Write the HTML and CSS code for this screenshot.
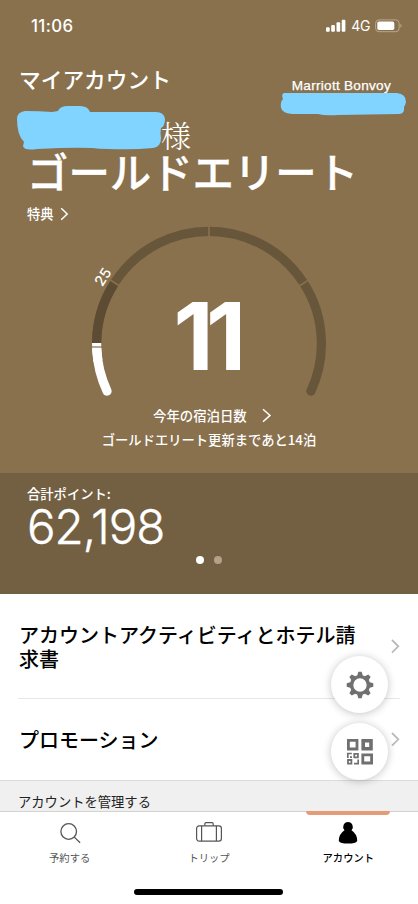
FILE: index.html
```html
<!DOCTYPE html>
<html lang="ja">
<head>
<meta charset="utf-8">
<meta name="viewport" content="width=device-width">
<title>マイアカウント</title>
<link rel="stylesheet" href="styles.css">
</head>
<body>
<div class="app">
  <header class="hero">
    <div class="status">
      <span class="time">11:06</span>
      <div class="signals">
        <svg width="20" height="14" viewBox="0 0 20 14" fill="#fff"><rect x="0" y="8.3" width="3.7" height="4.5" rx="1"/><rect x="5.2" y="6" width="3.7" height="6.8" rx="1"/><rect x="10.5" y="3.3" width="3.7" height="9.5" rx="1"/><rect x="15.7" y=".7" width="3.7" height="12.1" rx="1"/></svg>
        <span class="network">4G</span>
        <svg width="28" height="14" viewBox="0 0 28 14"><rect x=".6" y=".9" width="23.6" height="11.8" rx="3.4" fill="none" stroke="#b7a78e"/><rect x="2.3" y="2.6" width="17" height="8.4" rx="1.8" fill="#fff"/><path d="M25.4 4.8q2.6 2 0 4z" fill="#b7a78e"/></svg>
      </div>
    </div>
    <div class="titlebar">
      <h1>マイアカウント</h1>
      <span class="program">Marriott Bonvoy</span>
    </div>
    <div class="name"><span>様</span></div>
    <div class="tier">ゴールドエリート</div>
    <div class="benefits">特典<svg width="9" height="14" viewBox="0 0 9 14"><path d="M1.2 1.2 7.2 7l-6 5.8"/></svg></div>
    <div class="gauge">
      <svg class="arc" width="260" height="180" viewBox="79 222 260 180" fill="none" stroke-width="9.2">
        <path d="M310.9 391.2A112.4 112.4 0 1 0 107.1 391.2" stroke="#68563b" stroke-linecap="round"/>
        <path d="M96.6 343.2A112.4 112.4 0 0 1 114.5 283" stroke="#5e4b33"/>
        <path d="M96.6 343A112.4 112.4 0 0 0 98 361" stroke="#fff"/>
        <path d="M96.7 349A112.4 112.4 0 0 0 107.1 391.2" stroke="#fff" stroke-linecap="round"/>
        <path d="M91 347H103" stroke="#89714e" stroke-width="1.2"/>
        <path d="M209 225v13M109.5 279.5l10 6.5M299.3 286l9.8-6.3" stroke="#89714e" stroke-width="1.6"/>
        <text x="103" y="282" transform="rotate(-57 103 277)">25</text>
      </svg>
      <span class="nights">11</span>
    </div>
    <div class="stay">今年の宿泊日数<svg width="10" height="15" viewBox="0 0 10 15"><path d="M1 1.2 8 7.4 1 13.8"/></svg></div>
    <div class="renewal">ゴールドエリート更新まであと14泊</div>
    <svg class="marks" width="418" height="160" viewBox="0 0 418 160" fill="#80d4ff">
      <path d="M17 119q0-7 8-8 15 0 27 1l6-1q2-5 10-5h12q8 0 10 6h66q8 0 9 7 0 7-4 9-1 4 0 10 0 9-8 10-20 2-44 1-10 0-17-1-18-1-55 1-13 2-14-3l1-4q-7-7-7-23z"/>
      <path d="M284 93h113q9 1 9 9-1 4-2 5 1 7-5 7l-61 1q-13 1-20-1h-26q-13-1-11-11 0-2 2-4-2-5 1-6z"/>
    </svg>
  </header>
  <section class="points">
    <div class="points-label">合計ポイント:</div>
    <div class="points-value">62,198</div>
    <div class="pager"><span class="dot on"></span><span class="dot"></span></div>
  </section>
  <main class="list">
    <div class="row first"><span>アカウントアクティビティとホテル請求書</span><svg width="9" height="15" viewBox="0 0 9 15"><path d="M1 1 7.3 7.3 1 13.6"/></svg></div>
    <div class="row second"><span>プロモーション</span><svg width="9" height="15" viewBox="0 0 9 15"><path d="M1 1 7.3 7.3 1 13.6"/></svg></div>
    <div class="fabs">
      <div class="fab"><svg width="28" height="28" viewBox="-14 -14 28 28"><circle r="8.4" fill="none" stroke="#707070" stroke-width="3.4"/><g fill="#707070"><path id="tooth" d="M-2.9-9-1.7-13.3H1.7L2.9-9z"/><use href="#tooth" transform="rotate(90)"/><use href="#tooth" transform="rotate(180)"/><use href="#tooth" transform="rotate(270)"/><use href="#tooth" transform="rotate(45)"/><use href="#tooth" transform="rotate(135)"/><use href="#tooth" transform="rotate(225)"/><use href="#tooth" transform="rotate(315)"/></g></svg></div>
      <div class="fab"><svg width="28" height="28" viewBox="0 0 28 28" fill="none" stroke="#707070"><path d="M2.4 2.4h8.6v8.6H2.4z" stroke-width="2.8"/><path d="M17.2 2.8h7.8v8h-7.8z" stroke-width="3.6"/><path d="M16.8 16.8h8.8v8.2h-8.8z" stroke-width="2.8"/><path d="M8.3 15.8h3.6v3.6H8.3zM2 22h3.4v3.6H2z" stroke-width="1.8"/><path d="M1.8 20v-4.5h4M12.2 21.5v4.2H8M4 19.2h2" stroke-width="1.7"/></svg></div>
    </div>
  </main>
  <div class="section-title">アカウントを管理する</div>
  <nav class="tabs">
    <div class="tab"><svg width="30" height="26" viewBox="0 0 30 26" fill="none" stroke="#555" stroke-width="1.3"><circle cx="13.7" cy="10.5" r="7.8"/><path d="m19.3 16.1 5.8 5.7"/></svg><span>予約する</span></div>
    <div class="tab"><svg width="30" height="26" viewBox="0 0 30 26" fill="none" stroke="#555" stroke-width="1.2"><rect x="2.6" y="4.8" width="24.8" height="15.3" rx="2.6"/><path d="M7.6 4.8v15.3M22.4 4.8v15.3M10.8 4.8V2.9q0-1.2 1.2-1.2h6q1.2 0 1.2 1.2v1.9"/></svg><span>トリップ</span></div>
    <div class="tab active"><svg width="30" height="26" viewBox="0 0 30 26"><path d="M15 .9a5 5 0 0 1 3.5 8.4q5.7 3.7 5.7 10.6-1.4 2.6-9.2 2.6t-9.2-2.6q0-6.9 5.7-10.6A5 5 0 0 1 15 .9z"/></svg><span>アカウント</span></div>
    <div class="home"></div>
  </nav>
</div>
</body>
</html>
```
FILE: styles.css
```css
* { box-sizing: border-box; }
body {
  margin: 0;
  background: #fff;
  color: #000;
  font-family: "Liberation Sans", "Noto Sans CJK JP", sans-serif;
}
svg { display: block; flex: none; }
.app {
  width: 418px;
  height: 904px;
  overflow: hidden;
  display: flex;
  flex-direction: column;
}
.hero {
  position: relative;
  height: 473px;
  background: #89714e;
  color: #fff;
  white-space: nowrap;
}
.status {
  height: 52px;
  padding: 0 15px 0 31px;
  display: flex;
  justify-content: space-between;
  align-items: center;
}
.time { font: 500 16.8px/20px Inter, sans-serif; letter-spacing: 0.4px; }
.signals { display: flex; align-items: center; gap: 5px; }
.network { font: 400 14px/20px Inter, sans-serif; letter-spacing: -0.4px; }
.titlebar {
  height: 54px;
  padding: 0 27px 0 19px;
  display: flex;
  justify-content: space-between;
  align-items: center;
}
h1 {
  margin: 0;
  font: 500 21.7px/30px "Noto Sans CJK JP", sans-serif;
}
.program {
  padding-top: 14px;
  font-size: 13.6px;
  line-height: 16px;
  letter-spacing: 0.27px;
  -webkit-text-stroke: 0.25px #fff;
}
.name {
  height: 44px;
  padding: 8px 0 0 161px;
  font: 300 30px/40px "Noto Serif CJK JP", "Noto Sans CJK JP", serif;
}
.tier {
  height: 50px;
  margin-top: -3px;
  margin-bottom: 3px;
  padding-left: 27px;
  font: 500 41.4px/46px "Noto Sans CJK JP", sans-serif;
  -webkit-text-stroke: 0.4px #fff;
}
.benefits {
  height: 28px;
  padding-left: 27px;
  display: flex;
  align-items: center;
  gap: 6px;
  font: 500 13.3px/20px "Noto Sans CJK JP", sans-serif;
}
.benefits svg, .stay svg { fill: none; stroke: #fff; stroke-width: 1.5; }
.gauge {
  height: 176px;
  margin-top: -6px;
  padding-left: 79px;
  display: grid;
  grid-template-columns: 260px;
}
.gauge > * { grid-area: 1 / 1; }
.arc text { font: 500 14.5px Inter, sans-serif; fill: #fff; stroke: none; text-anchor: middle; }
.nights {
  padding: 58px 6px 0 0;
  text-align: center;
  font: 700 93px/112px Inter, sans-serif;
  letter-spacing: -7.5px;
}
.stay {
  height: 24px;
  margin-top: 5px;
  margin-bottom: 1px;
  padding-left: 153px;
  display: flex;
  align-items: center;
  gap: 15px;
  font: 500 13.4px/20px "Noto Sans CJK JP", sans-serif;
}
.renewal {
  text-align: center;
  font: 500 13.3px/24px "Noto Sans CJK JP", sans-serif;
}
.marks { position: absolute; left: 0; top: 0; }
.points {
  height: 121px;
  padding: 11px 27px 0;
  background: #736043;
  color: #fff;
}
.points-label { font: 500 13.3px/20px "Noto Sans CJK JP", sans-serif; }
.points-value {
  height: 46px;
  font: 300 47.5px/45px Inter, sans-serif;
  letter-spacing: -1px;
  -webkit-text-stroke: 0.4px #fff;
}
.pager { margin-top: 6px; display: flex; justify-content: center; gap: 10px; }
.dot { width: 8px; height: 8px; border-radius: 50%; background: #b0a188; }
.dot.on { background: #fff; }
.list { position: relative; height: 186px; padding: 0 18px; }
.row {
  display: flex;
  justify-content: space-between;
  align-items: center;
  font: 500 20px/24.5px "Noto Sans CJK JP", sans-serif;
}
.row span { width: 344px; padding: 2px 0 0 1px; }
.row svg { fill: none; stroke: #bbb; stroke-width: 1.8; }
.first { height: 105px; border-bottom: 1px solid #e7e7e7; }
.second { height: 81px; }
.fabs {
  position: absolute;
  left: 331px;
  top: 62px;
  display: flex;
  flex-direction: column;
  gap: 10px;
}
.fab {
  width: 57px;
  height: 57px;
  border-radius: 50%;
  background: #fff;
  box-shadow: 0 1px 8px rgba(0, 0, 0, .24);
  display: flex;
  align-items: center;
  justify-content: center;
}
.section-title {
  height: 31px;
  padding: 11px 18px 0;
  border-top: 1px solid #dcdcdc;
  background: #f0f0f0;
  color: #222;
  font: 400 13.3px/20px "Noto Sans CJK JP", sans-serif;
}
.tabs {
  height: 93px;
  border-top: 1px solid #d2d2d2;
  background: #fff;
  display: grid;
  grid-template-columns: repeat(3, 1fr);
  grid-template-rows: 77px 6px;
}
.tab {
  padding-top: 9px;
  display: flex;
  flex-direction: column;
  align-items: center;
  gap: 2px;
  color: #555;
  font: 400 10.3px/18px "Noto Sans CJK JP", sans-serif;
}
.active { color: #000; font-weight: 500; }
.active::before {
  content: "";
  width: 84px;
  height: 4px;
  margin: -10px 0 4px;
  border-radius: 0 0 4px 4px;
  background: #e49c76;
}
.home {
  grid-column: 1 / 4;
  justify-self: center;
  width: 149px;
  height: 6px;
  border-radius: 3px;
  background: #000;
}
```
